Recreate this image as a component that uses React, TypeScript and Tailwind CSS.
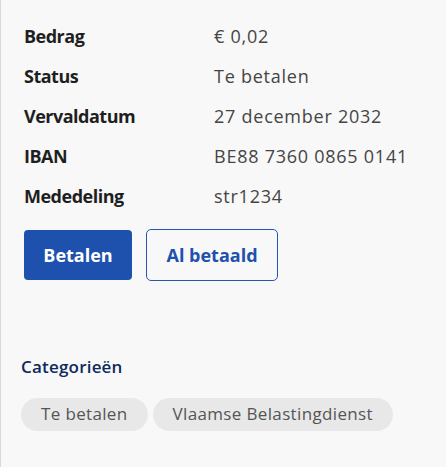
import React from "react";

const rows: [string, string][] = [
  ["Bedrag", "€ 0,02"],
  ["Status", "Te betalen"],
  ["Vervaldatum", "27 december 2032"],
  ["IBAN", "BE88 7360 0865 0141"],
  ["Mededeling", "str1234"],
];

export default function App() {
  return (
    <div
      className="w-[446px] h-[467px] bg-[#f8f8f8] border-l border-[#d9d9d9] overflow-hidden"
      style={{ fontFamily: "'Open Sans', sans-serif" }}
    >
      <div className="pl-[23px] pt-4">
        {rows.map(([k, v]) => (
          <div key={k} className="flex h-10 items-center text-[18px]">
            <div className="w-[190px] font-bold text-[#1f1f1f] tracking-[-0.5px]">{k}</div>
            <div className="text-[#454545] tracking-[0.75px]">{v}</div>
          </div>
        ))}
        <div className="flex items-center gap-[14px] mt-[13px]">
          <button className="h-[50px] w-[108px] rounded-[4px] bg-[#1e50ad] text-white font-bold text-[18px]">
            Betalen
          </button>
          <button className="h-[52px] w-[132px] rounded-[5px] border border-[#2457b5] text-[#1e50ad] font-bold text-[18px]">
            Al betaald
          </button>
        </div>
      </div>
      <div className="pl-[20px] mt-[73px]">
        <div className="text-[17px] font-semibold text-[#0d2a5c] tracking-[0.2px]">Categorieën</div>
        <div className="flex gap-[5px] mt-[18px]">
          <span className="h-[33px] px-5 rounded-full bg-[#e8e8e8] text-[#555] text-[17px] tracking-[0.35px] flex items-center">
            Te betalen
          </span>
          <span className="h-[33px] px-5 rounded-full bg-[#e8e8e8] text-[#555] text-[17px] tracking-[0.35px] flex items-center">
            Vlaamse Belastingdienst
          </span>
        </div>
      </div>
    </div>
  );
}
